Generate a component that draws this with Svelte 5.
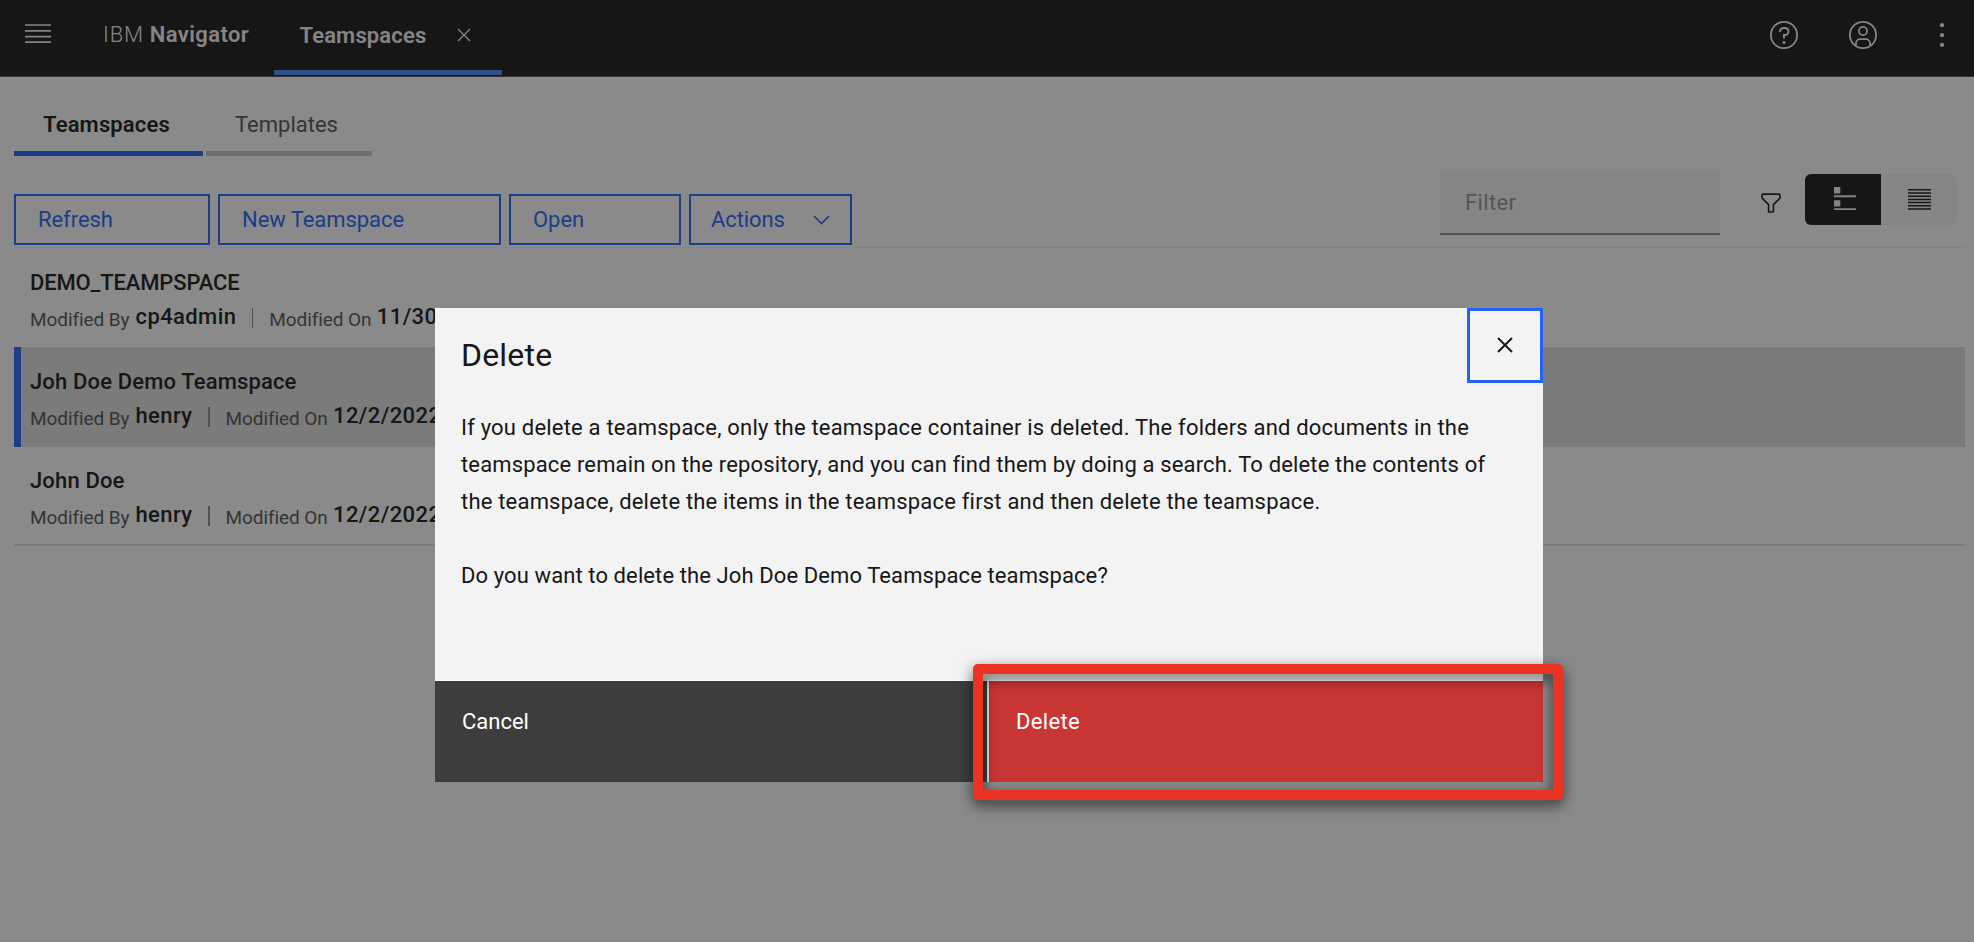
<script>
  const teamspaces = [
    { name: 'DEMO_TEAMPSPACE', by: 'cp4admin', on: '11/30/2022', selected: false, tight: true },
    { name: 'Joh Doe Demo Teamspace', by: 'henry', on: '12/2/2022', selected: true },
    { name: 'John Doe', by: 'henry', on: '12/2/2022', selected: false }
  ];
  const message = [
    { text: 'If you delete a teamspace, only the teamspace container is deleted. The folders and documents in the', tracking: 0.195 },
    { text: 'teamspace remain on the repository, and you can find them by doing a search. To delete the contents of', tracking: 0.15 },
    { text: 'the teamspace, delete the items in the teamspace first and then delete the teamspace.', tracking: 0.195 }
  ];
</script>

<div class="app">
  <header>
    <svg class="menu" width="26" height="19" viewBox="0 0 26 19"><path d="M0 1h26M0 6.9h26M0 12.7h26M0 18.2h26" stroke="#f4f4f4" stroke-width="1.7" /></svg>
    <div class="brand"><span>IBM</span> <b>Navigator</b></div>
    <div class="apptab">
      <b>Teamspaces</b>
      <svg width="14" height="14" viewBox="0 0 14 14"><path d="M1 1l12 12M13 1L1 13" stroke="#f4f4f4" stroke-width="1.4" /></svg>
    </div>
    <div class="tools">
      <svg width="32" height="32" viewBox="0 0 32 32" fill="#f4f4f4">
        <circle cx="16" cy="16" r="13.1" fill="none" stroke="#f4f4f4" stroke-width="1.8" />
        <circle cx="16" cy="23.5" r="1.5" />
        <path d="M17,8H15.5A4.49,4.49,0,0,0,11,12.5V13h2v-.5A2.5,2.5,0,0,1,15.5,10H17a2.5,2.5,0,0,1,0,5H15v4.5h2V17a4.5,4.5,0,0,0,0-9Z" />
      </svg>
      <svg width="32" height="32" viewBox="0 0 32 32" fill="none" stroke="#f4f4f4" stroke-width="1.8">
        <circle cx="16" cy="16" r="13.1" />
        <circle cx="16" cy="12" r="4.1" />
        <path d="M9 26.5V24a4 4 0 0 1 4-3.8h6a4 4 0 0 1 4 3.8v2.5" />
      </svg>
      <svg width="32" height="32" viewBox="0 0 32 32" fill="#f4f4f4">
        <circle cx="16" cy="6.2" r="2.1" /><circle cx="16" cy="16.2" r="2.1" /><circle cx="16" cy="25.9" r="2.1" />
      </svg>
    </div>
  </header>

  <main>
    <nav>
      <div class="tab active">Teamspaces</div>
      <div class="tab">Templates</div>
    </nav>

    <div class="toolbar">
      <button class="refresh">Refresh</button>
      <button class="new">New Teamspace</button>
      <button class="open">Open</button>
      <button class="actions">
        Actions
        <svg width="17" height="10" viewBox="0 0 17 10"><path d="M1 1l7.5 7.6L16 1" fill="none" stroke="#2264fa" stroke-width="1.7" /></svg>
      </button>
      <div class="filter">Filter</div>
      <svg class="funnel" width="26" height="26" viewBox="0 0 32 32" fill="#161616"><path d="M18,28H14a2,2,0,0,1-2-2V18.41L4.59,11A2,2,0,0,1,4,9.59V6A2,2,0,0,1,6,4H26a2,2,0,0,1,2,2V9.59A2,2,0,0,1,27.41,11L20,18.41V26A2,2,0,0,1,18,28ZM6,6V9.59l8,8V26h4V17.59l8-8V6Z" /></svg>
      <div class="switcher">
        <div class="view on">
          <svg width="22" height="24" viewBox="0 0 22 24" fill="#f4f4f4"><path d="M0 0h6.3v6.6H0zM0 8.3h22v2H0zM0 13.2h6.3v6.4H0zM0 21.3h22v1.8H0z" /></svg>
        </div>
        <div class="view">
          <svg width="23" height="24" viewBox="0 0 23 24"><path d="M0 2.7h23M0 5.9h23M0 9.2h23M0 12.4h23M0 15.6h23M0 18.8h23M0 22h23" stroke="#161616" stroke-width="1.5" /></svg>
        </div>
      </div>
    </div>

    <div class="list">
      {#each teamspaces as item}
        <div class="row" class:selected={item.selected}>
          <div class="name" class:tight={item.tight}>{item.name}</div>
          <div class="meta">
            <span>Modified By</span><strong>{item.by}</strong>
            <i></i>
            <span class="on">Modified On</span><strong>{item.on}</strong>
          </div>
        </div>
      {/each}
    </div>
  </main>

  <div class="overlay">
    <section class="modal">
      <div class="head">
        <h2>Delete</h2>
        <div class="close">
          <svg width="16" height="16" viewBox="0 0 16 16"><path d="M1 1l14 14M15 1L1 15" stroke="#161616" stroke-width="1.9" /></svg>
        </div>
      </div>
      <div class="body">
        {#each message as line}
          <div style:letter-spacing="{line.tracking}px">{line.text}</div>
        {/each}
        <div class="question">Do you want to delete the Joh Doe Demo Teamspace teamspace?</div>
      </div>
      <footer>
        <div class="cancel">Cancel</div>
        <div class="delete">Delete</div>
      </footer>
      <div class="callout"></div>
    </section>
  </div>
</div>

<style>
  :global(body) { background: #fff; }
  .app {
    position: relative;
    height: 942px;
    overflow: hidden;
    background: #fff;
    color: #161616;
    font: 400 22px/24px Roboto, "Liberation Sans", sans-serif;
    white-space: nowrap;
  }
  .app, .app * { box-sizing: border-box; }
  svg { display: block; flex: none; }

  header {
    display: flex;
    height: 77px;
    padding-left: 25px;
    background: #161616;
    border-bottom: 1px solid #525252;
    color: #f4f4f4;
  }
  .menu { margin-top: 24px; }
  .brand { width: 223px; padding: 23px 0 0 52px; }
  .brand span { font-weight: 300; letter-spacing: 0.8px; }
  .brand b { font-weight: 600; letter-spacing: 0.4px; margin-left: 0.5px; }
  .apptab {
    display: flex;
    width: 228px;
    height: 75px;
    padding: 24px 0 0 25.5px;
    border-bottom: 5px solid #4589ff;
  }
  .apptab b { width: 157px; font-weight: 600; letter-spacing: 0.15px; }
  .apptab svg { margin-top: 4px; }
  .tools { display: flex; gap: 47px; margin: 19px 16px 0 auto; }

  main { padding: 17px 9px 0 14px; }
  nav { display: flex; gap: 3px; }
  .tab {
    width: 166px;
    height: 62px;
    padding: 19px 0 0 29px;
    border-bottom: 5px solid #c6c6c6;
    color: #525252;
  }
  .tab.active { width: 189px; border-color: #2264fa; color: #161616; font-weight: 600; letter-spacing: 0.15px; }

  .toolbar {
    display: flex;
    align-items: flex-start;
    height: 92px;
    padding-right: 8px;
    border-bottom: 1px solid #f0f0f0;
  }
  button {
    display: flex;
    align-items: center;
    height: 51px;
    margin: 38px 8px 0 0;
    padding: 1px 0 0 22px;
    border: 2px solid #2264fa;
    border-radius: 0;
    background: none;
    color: #2264fa;
    font: inherit;
    letter-spacing: -0.05px;
    text-align: left;
  }
  .refresh { width: 196px; }
  .new { width: 283px; }
  .open { width: 172px; }
  .actions { width: 163px; padding-left: 20px; letter-spacing: -0.1px; }
  .actions svg { margin-left: 28.5px; }
  .filter {
    width: 280px;
    height: 64px;
    margin: 15px 0 0 auto;
    padding: 20px 0 0 25px;
    background: #f4f4f4;
    border-bottom: 2px solid #8d8d8d;
    color: #949494;
    letter-spacing: 0.36px;
  }
  .funnel { margin: 34px 0 0 38px; }
  .switcher { display: flex; height: 51px; margin: 18px 0 0 21px; border-radius: 6px; overflow: hidden; }
  .view { width: 76px; padding: 13px 0 0 27px; background: #f4f4f4; }
  .view.on { padding-left: 29px; background: #161616; }

  .row { height: 99px; padding: 23px 0 0 16px; }
  .row.selected { height: 100px; padding: 23px 0 0 9px; border-left: 7px solid #2264fa; background: #e0e0e0; }
  .row:last-child { border-bottom: 2px solid #e0e0e0; padding-top: 22px; }
  .name { font-weight: 500; letter-spacing: 0.15px; }
  .name.tight { letter-spacing: -0.15px; }
  .meta { display: flex; margin-top: 10px; }
  .meta span { width: 105.5px; color: #525252; font-size: 19px; line-height: 29px; letter-spacing: -0.08px; }
  .meta span.on { width: 107.5px; }
  .meta strong { font-weight: 500; letter-spacing: 0.4px; }
  .meta i { width: 1.5px; height: 20px; margin: 3px 16px 0 15.5px; background: #8d8d8d; }

  .overlay {
    position: absolute;
    inset: 0;
    padding: 307.5px 431px 0 435px;
    background: rgba(22, 22, 22, 0.5);
  }
  .modal { position: relative; background: #f3f3f3; }
  .head { display: flex; justify-content: space-between; height: 101px; padding-left: 26px; }
  h2 { margin: 27px 0 0; font-weight: 400; font-size: 32px; line-height: 40px; letter-spacing: 0.2px; }
  .close {
    display: grid;
    place-items: center;
    width: 76px;
    height: 75px;
    border: 3px solid #2264fa;
  }
  .body { height: 272px; padding-left: 26px; border-bottom: 1px solid #fff; line-height: 37.2px; }
  .question { margin-top: 37.2px; letter-spacing: 0.1px; }
  footer { display: flex; height: 101px; color: #fff; }
  .cancel { width: 552px; padding: 29px 0 0 27px; background: #3d3d3d; letter-spacing: 0; }
  .delete { flex: 1; padding: 29px 0 0 27px; border-left: 2px solid #e8e8e8; background: #c93735; letter-spacing: 0.35px; }
  /* Outline drawn over the primary button */
  .callout {
    position: absolute;
    left: 538px;
    top: 356px;
    width: 590px;
    height: 136px;
    border: 10px solid #eb3323;
    border-radius: 5px;
    filter: drop-shadow(0 5px 7px rgba(0, 0, 0, 0.65));
  }
</style>
